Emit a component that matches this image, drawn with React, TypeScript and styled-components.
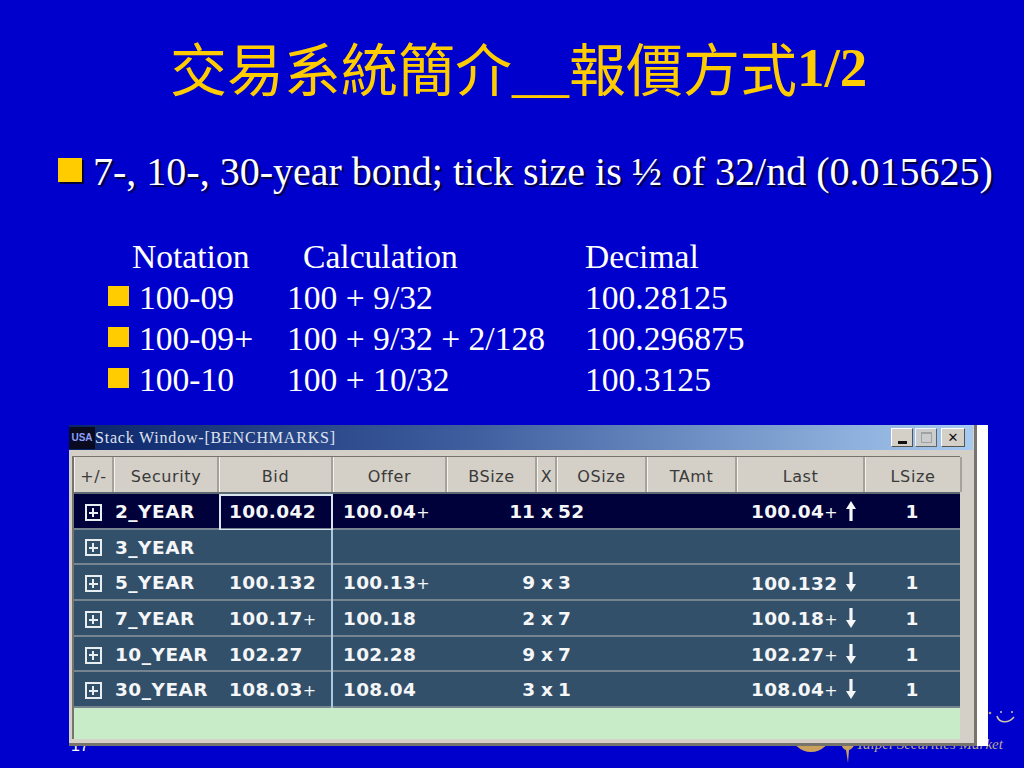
import React from "react";
import styled, { createGlobalStyle } from "styled-components";

const rows = [
  { name: "2_YEAR", bid: "100.042", offer: "100.04", offerPlus: true, bsize: "11", osize: "52", last: "100.04", lastPlus: true, dir: "up", lsize: "1", selected: true },
  { name: "3_YEAR" },
  { name: "5_YEAR", bid: "100.132", offer: "100.13", offerPlus: true, bsize: "9", osize: "3", last: "100.132", dir: "down", lsize: "1" },
  { name: "7_YEAR", bid: "100.17", bidPlus: true, offer: "100.18", bsize: "2", osize: "7", last: "100.18", lastPlus: true, dir: "down", lsize: "1" },
  { name: "10_YEAR", bid: "102.27", offer: "102.28", bsize: "9", osize: "7", last: "102.27", lastPlus: true, dir: "down", lsize: "1" },
  { name: "30_YEAR", bid: "108.03", bidPlus: true, offer: "108.04", bsize: "3", osize: "1", last: "108.04", lastPlus: true, dir: "down", lsize: "1" },
];

const quotes = [
  ["100-09", "100 + 9/32", "100.28125"],
  ["100-09+", "100 + 9/32 + 2/128", "100.296875"],
  ["100-10", "100 + 10/32", "100.3125"],
];

const headers = ["+/-", "Security", "Bid", "Offer", "BSize", "X", "OSize", "TAmt", "Last", "LSize"];

const App = () => {
  return (
    <Slide>
      <GlobalStyle />
      <Logo>
        <LogoSmile viewBox="0 0 28 14">
          <circle cx="2" cy="3" r="1.3" fill="#b9a06e" />
          <circle cx="13" cy="2" r="1" fill="#cfc4a8" />
          <circle cx="24" cy="2" r="1" fill="#cfc4a8" />
          <path d="M9 6c2 7 11 8 17 1" fill="none" stroke="#cfc4a8" strokeWidth="1.6" />
        </LogoSmile>
        <LogoDisc />
        <LogoSwoosh viewBox="0 0 16 22">
          <path d="M1 0h14c0 5-3 8-6 9l-1 13-2-13C3 8 1 5 1 0z" fill="#c9a15c" />
        </LogoSwoosh>
        <LogoText>Taipei Securities Market</LogoText>
      </Logo>
      <PageNumber>17</PageNumber>
      <Title>
        交易系統簡介__報價方式<TitleNum>1/2</TitleNum>
      </Title>
      <MainPoint>
        <BigBullet />
        7-, 10-, 30-year bond; tick size is ½ of 32/nd (0.015625)
      </MainPoint>
      <QuoteHead>
        <span>Notation</span>
        <span>Calculation</span>
        <span>Decimal</span>
      </QuoteHead>
      {quotes.map((q) => (
        <QuoteRow key={q[0]}>
          <SmallBullet />
          <span>{q[0]}</span>
          <span>{q[1]}</span>
          <span>{q[2]}</span>
        </QuoteRow>
      ))}
      <Window>
        <TitleBar>
          <UsaIcon>USA</UsaIcon>
          <WindowName>Stack Window-[BENCHMARKS]</WindowName>
          <WinButton>
            <MinGlyph />
          </WinButton>
          <WinButton $disabled>
            <MaxGlyph />
          </WinButton>
          <WinButton $close>
            <CloseGlyph>✕</CloseGlyph>
          </WinButton>
        </TitleBar>
        <Grid>
          <HeaderRow>
            {headers.map((h) => (
              <HeaderCell key={h}>{h}</HeaderCell>
            ))}
          </HeaderRow>
          {rows.map((r) => (
            <Row key={r.name} $selected={r.selected}>
              <ExpandCell>
                <ExpandBox />
              </ExpandCell>
              <NameCell>{r.name}</NameCell>
              <BidCell $focused={r.selected}>
                {r.bid}
                {r.bidPlus && <Plus>+</Plus>}
              </BidCell>
              <ValueCell>
                {r.offer}
                {r.offerPlus && <Plus>+</Plus>}
              </ValueCell>
              <SizeCell>{r.bsize}</SizeCell>
              <TimesCell>{r.bsize ? "x" : ""}</TimesCell>
              <ValueCell $flush>{r.osize}</ValueCell>
              <ValueCell />
              <LastCell>
                <LastValue>
                  {r.last}
                  {r.lastPlus && <Plus>+</Plus>}
                </LastValue>
                {r.dir && (
                  <Arrow viewBox="0 0 10 20" $up={r.dir === "up"}>
                    <path d="M3.4 0h3.2v12H10l-5 8-5-8h3.4z" fill="#f4f6f8" />
                  </Arrow>
                )}
              </LastCell>
              <LSizeCell>{r.lsize}</LSizeCell>
            </Row>
          ))}
          <EmptyArea />
        </Grid>
        <SideStrip />
      </Window>
    </Slide>
  );
};

export default App;

const GlobalStyle = createGlobalStyle`
  html, body {
    margin: 0;
    padding: 0;
    background: #0000cc;
  }
`;

const Slide = styled.div`
  position: relative;
  width: 1024px;
  height: 768px;
  overflow: hidden;
  background: #0000cc;
  font-family: "Liberation Serif", "Noto Sans CJK TC", serif;
  color: #fff;
`;

const Title = styled.h1`
  margin: 0;
  padding: 34px 0 0 170px;
  height: 142px;
  box-sizing: border-box;
  font-size: 57px;
  line-height: 76px;
  font-weight: 400;
  color: #ffcc00;
  white-space: nowrap;
`;

const TitleNum = styled.span`
  font-weight: 700;
  font-size: 55px;
  position: relative;
  top: -5px;
`;

const MainPoint = styled.div`
  display: flex;
  align-items: center;
  height: 60px;
  padding-left: 58px;
  font-size: 40px;
  line-height: 60px;
  white-space: nowrap;
  text-shadow: 2px 2px 1px #00003a;
`;

const BigBullet = styled.span`
  width: 24px;
  height: 24px;
  margin: -5px 11px 0 0;
  background: #ffcc00;
  box-shadow: 2px 2px 0 #00003a;
  flex: none;
`;

const QuoteHead = styled.div`
  display: grid;
  grid-template-columns: 171px 282px 1fr;
  height: 41px;
  margin-top: 34px;
  padding-left: 132px;
  font-size: 33.6px;
  line-height: 41px;
  white-space: nowrap;
`;

const QuoteRow = styled.div`
  display: grid;
  grid-template-columns: 31px 148px 298px 1fr;
  align-items: center;
  height: 41px;
  padding-left: 108px;
  font-size: 33.6px;
  line-height: 41px;
  white-space: nowrap;
`;

const SmallBullet = styled.span`
  width: 21px;
  height: 20px;
  margin-top: -3px;
  background: #ffcc00;
`;

const Window = styled.div`
  position: relative;
  width: 919px;
  height: 321px;
  margin: 25px 0 0 69px;
  box-sizing: border-box;
  padding-right: 15px;
  background: #d4d0c8;
  border-bottom: 3px solid #77746e;
`;

const SideStrip = styled.div`
  position: absolute;
  top: 0;
  right: 0;
  bottom: -3px;
  width: 14px;
  box-sizing: border-box;
  background: #fff;
  border-left: 3px solid #77746e;
`;

const TitleBar = styled.div`
  display: flex;
  align-items: center;
  height: 25px;
  padding-right: 8px;
  background: linear-gradient(90deg, #0a246a 0%, #3f5f9f 45%, #a6caf0 100%);
`;

const UsaIcon = styled.span`
  width: 26px;
  height: 22px;
  background: #0a0a20;
  color: #8fa0ff;
  font: 700 10px/22px "Liberation Sans", sans-serif;
  text-align: center;
`;

const WindowName = styled.span`
  flex: 1;
  font-size: 16px;
  letter-spacing: 0.8px;
  color: #dfe4ee;
  white-space: nowrap;
`;

const WinButton = styled.span<{ $disabled?: boolean; $close?: boolean }>`
  display: flex;
  align-items: center;
  justify-content: center;
  width: ${(p) => (p.$close ? "24px" : "22px")};
  height: 19px;
  margin-left: ${(p) => (p.$close ? "4px" : "2px")};
  box-sizing: border-box;
  background: #d4d0c8;
  border: 1px solid;
  border-color: #fff #55534e #55534e #fff;
  opacity: ${(p) => (p.$disabled ? 0.85 : 1)};
`;

const MinGlyph = styled.span`
  width: 9px;
  height: 3px;
  margin-top: 9px;
  background: #111;
`;

const MaxGlyph = styled.span`
  width: 11px;
  height: 11px;
  border: 1px solid #a09d96;
  border-top-width: 2px;
  box-sizing: border-box;
`;

const CloseGlyph = styled.span`
  font: 700 13px/1 "DejaVu Sans", sans-serif;
  color: #111;
`;

const Grid = styled.div`
  margin: 6px 13px 0 3px;
  height: 282px;
  border-top: 1px solid #77746e;
  border-left: 2px solid #77746e;
  display: flex;
  flex-direction: column;
`;

const columns = "40px 105px 114px 114px 90px 20px 90px 90px 128px 97px";

const HeaderRow = styled.div`
  display: grid;
  grid-template-columns: ${columns};
  height: 35px;
  flex: none;
  border-bottom: 2px solid #5e6a72;
`;

const HeaderCell = styled.div`
  display: flex;
  align-items: center;
  justify-content: center;
  padding-top: 3px;
  box-sizing: border-box;
  background: #d4d0c8;
  border-right: 2px solid #a5a29b;
  border-left: 1px solid #f4f2ec;
  font: 400 16px "DejaVu Sans", sans-serif;
  letter-spacing: 0.6px;
  color: #3a3a3a;
  white-space: nowrap;
  overflow: hidden;
`;

const Row = styled.div<{ $selected?: boolean }>`
  display: grid;
  grid-template-columns: ${columns};
  height: 35.7px;
  flex: none;
  box-sizing: border-box;
  align-items: stretch;
  background: ${(p) => (p.$selected ? "#00003a" : "#33506a")};
  border-bottom: 2px solid #76848f;
  font: 700 18.5px/36px "DejaVu Sans", sans-serif;
  color: #f4f6f8;
  white-space: nowrap;
`;

const ExpandCell = styled.div`
  display: flex;
  align-items: center;
  justify-content: center;
  padding-right: 2px;
`;

const ExpandBox = styled.span`
  position: relative;
  width: 17px;
  height: 17px;
  box-sizing: border-box;
  border: 2px solid #e8edf0;
  &::before {
    content: "";
    position: absolute;
    left: 2px;
    right: 2px;
    top: 5.5px;
    height: 2px;
    background: #e8edf0;
  }
  &::after {
    content: "";
    position: absolute;
    top: 2px;
    bottom: 2px;
    left: 5.5px;
    width: 2px;
    background: #e8edf0;
  }
`;

const NameCell = styled.div`
  padding-left: 1px;
  font-size: 18.5px;
  letter-spacing: 0.5px;
`;

const BidCell = styled.div<{ $focused?: boolean }>`
  box-sizing: border-box;
  padding-left: 10px;
  border-right: 2px solid #a9c8de;
  letter-spacing: 0.4px;
  ${(p) => p.$focused && "outline: 2px solid #d8e4ee; outline-offset: -2px;"}
`;

const ValueCell = styled.div<{ $flush?: boolean }>`
  padding-left: ${(p) => (p.$flush ? "1px" : "10px")};
  letter-spacing: 0.3px;
`;

const SizeCell = styled.div`
  padding-right: 2px;
  text-align: right;
`;

const TimesCell = styled.div`
  text-align: center;
`;

const LastCell = styled.div`
  display: flex;
  align-items: center;
  padding-left: 14px;
  letter-spacing: 0.3px;
`;

const LastValue = styled.span`
  width: 95px;
`;

const LSizeCell = styled.div`
  padding-right: 3px;
  text-align: center;
`;

const Plus = styled.span`
  font-weight: 400;
  font-size: 16px;
`;

const Arrow = styled.svg<{ $up?: boolean }>`
  width: 10px;
  height: 20px;
  margin-top: -3px;
  transform: ${(p) => (p.$up ? "rotate(180deg)" : "none")};
`;

const EmptyArea = styled.div`
  flex: 1;
  background: #c8ebc8;
`;

const PageNumber = styled.span`
  position: absolute;
  left: 71px;
  top: 737px;
  font: 400 16px "Liberation Sans", sans-serif;
`;

const Logo = styled.div`
  position: absolute;
  left: 790px;
  top: 700px;
  width: 234px;
  height: 68px;
`;

const LogoSmile = styled.svg`
  position: absolute;
  left: 198px;
  top: 10px;
  width: 28px;
  height: 14px;
`;

const LogoDisc = styled.span`
  position: absolute;
  left: 1px;
  top: 12px;
  width: 40px;
  height: 40px;
  border-radius: 50%;
  background: #c9a15c;
`;

const LogoSwoosh = styled.svg`
  position: absolute;
  left: 50px;
  top: 41px;
  width: 16px;
  height: 22px;
`;

const LogoText = styled.span`
  position: absolute;
  left: 66px;
  top: 36px;
  font: italic 400 15px "Liberation Serif", serif;
  color: #b8a890;
  white-space: nowrap;
`;
